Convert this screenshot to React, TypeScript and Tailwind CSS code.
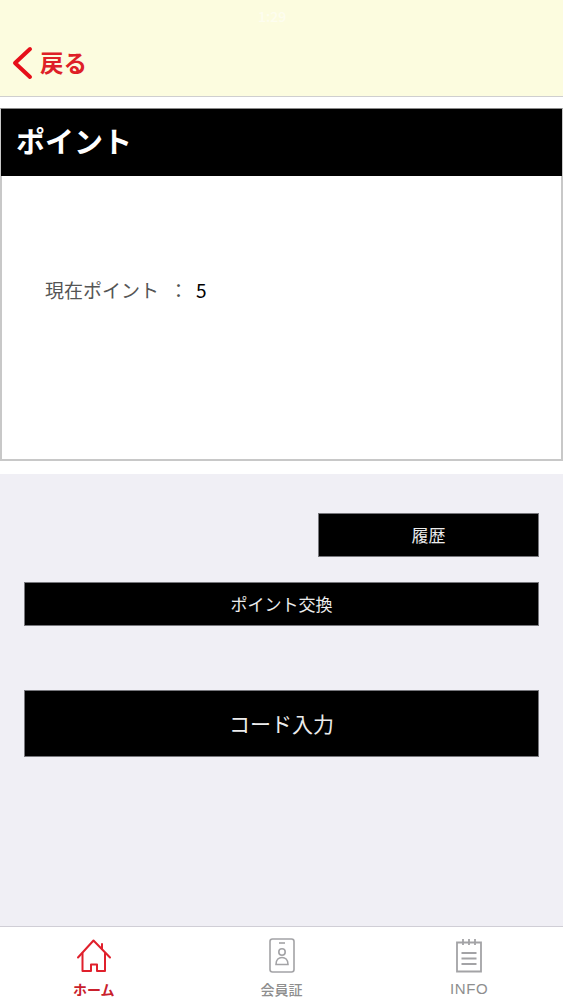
import React from 'react';

const font = "font-['Noto_Sans_CJK_JP','Noto_Sans',sans-serif]";

function HomeIcon() {
    return (
        <svg width="36" height="34" viewBox="0 0 36 34" fill="none" stroke="#e0202c" strokeWidth="2" strokeLinejoin="round" strokeLinecap="round">
            <path d="M2 18.5 L17.5 1.5 L34 18.5" />
            <path d="M26 5 L26 10" />
            <path d="M6.5 14.5 V32 H15 V25.5 H21 V32 H29 V14.5" />
        </svg>
    );
}

function CardIcon() {
    return (
        <svg width="26" height="35" viewBox="0 0 26 35" fill="none" stroke="#a3a3a6" strokeWidth="1.6">
            <rect x="1" y="1" width="24" height="33" rx="2.5" />
            <path d="M10 5 H16" />
            <circle cx="13" cy="14" r="3.2" />
            <path d="M7 26.5 C7 21.5 10 19.5 13 19.5 C16 19.5 19 21.5 19 26.5 Z" />
        </svg>
    );
}

function NoteIcon() {
    return (
        <svg width="28" height="35" viewBox="0 0 28 35" fill="none" stroke="#a3a3a6" strokeWidth="1.8">
            <path d="M2 4.5 H26 V33.5 H2 Z" />
            <path d="M8 1 V7 M14 1 V7 M20 1 V7" />
            <path d="M6.5 15 H21.5 M6.5 20.5 H21.5 M6.5 26 H21.5" />
        </svg>
    );
}

function NavItem({ icon, children }: { icon: React.ReactNode; children: React.ReactNode }) {
    return (
        <div className="flex flex-1 flex-col items-center">
            <div className="flex h-[36px] items-end">{icon}</div>
            <div className="mt-[6px] h-[20px]">{children}</div>
        </div>
    );
}

export default function App() {
    return (
        <div className={`flex h-[1000px] w-[563px] flex-col overflow-hidden bg-white ${font}`}>
            {/* header */}
            <div className="relative h-[97px] shrink-0 border-b border-[#cfcfcf] bg-[#fcfcdf] pl-[11px] pt-[46px]">
                <span className="absolute left-[258px] top-[6px] text-[14px] font-medium text-white/50">1:29</span>
                <div className="flex items-center gap-[7px]">
                    <svg width="22" height="34" viewBox="0 0 22 34" fill="none" stroke="#e60f1a" strokeWidth="4" strokeLinecap="round" strokeLinejoin="round">
                        <path d="M19 3 L4 17 L19 31" />
                    </svg>
                    <span className="pb-[2px] text-[23.5px] font-bold leading-[30px] text-[#de2027]">戻る</span>
                </div>
            </div>

            {/* point card */}
            <div className="mt-[11px] flex h-[353px] shrink-0 flex-col border border-b-2 border-[#c8c8c8] border-t-[#8a8a8a]">
                <div className="flex h-[67px] shrink-0 items-center bg-black pb-[4px] pl-[15px]">
                    <span className="text-[29px] font-bold leading-none text-white">ポイント</span>
                </div>
                <div className="flex-1 border-l border-r border-[#c8c8c8] pl-[43px] pt-[100px]">
                    <div className="flex items-center text-[19px] leading-[28px]">
                        <span className="text-[#555555]">現在ポイント</span>
                        <span className="ml-[10px] text-[#555555]">：</span>
                        <span className="ml-[8px] text-black">5</span>
                    </div>
                </div>
            </div>

            {/* actions */}
            <div className="mt-[13px] flex flex-1 flex-col bg-[#f0eff5] px-[24px] pt-[39px]">
                <button className="ml-auto h-[44px] w-[221px] border border-[#77777c] bg-black text-[17px] text-[#ececec]">履歴</button>
                <button className="mt-[25px] h-[44px] w-full border border-[#77777c] bg-black text-[17px] text-[#ececec]">ポイント交換</button>
                <button className="mt-[64px] h-[67px] w-full border border-[#77777c] bg-black text-[21px] text-[#ececec]">コード入力</button>
            </div>

            {/* tab bar */}
            <div className="flex h-[74px] shrink-0 border-t border-[#d0ced6] bg-white pt-[10px]">
                <NavItem icon={<HomeIcon />}>
                    <span className="block text-[14px] font-bold leading-[20px] text-[#c9202c]">ホーム</span>
                </NavItem>
                <NavItem icon={<CardIcon />}>
                    <span className="block text-[14px] font-medium leading-[20px] text-[#8e8e8e]">会員証</span>
                </NavItem>
                <NavItem icon={<NoteIcon />}>
                    <span className="block font-['Liberation_Sans',sans-serif] text-[15px] leading-[20px] tracking-[0.6px] text-[#8e8e8e]">INFO</span>
                </NavItem>
            </div>
        </div>
    );
}
